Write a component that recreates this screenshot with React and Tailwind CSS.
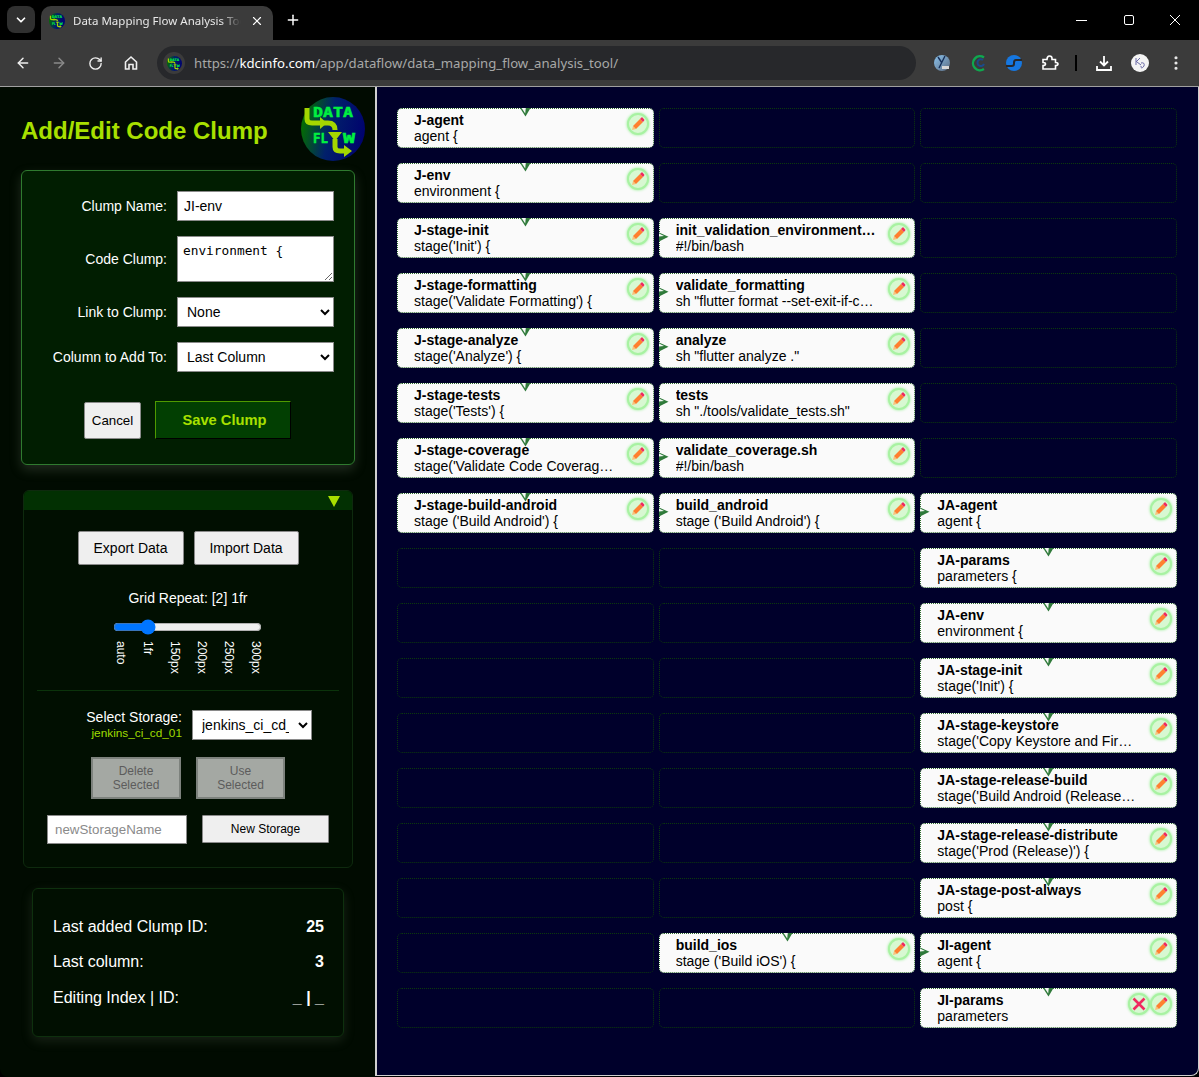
import React from "react";
import { ArrowLeft, ArrowRight, RotateCw, Plus, X, ChevronDown, EllipsisVertical } from "lucide-react";

const rows = [
  [{ n: "J-agent", c: "agent {", top: 1 }, null, null],
  [{ n: "J-env", c: "environment {", top: 1 }, null, null],
  [{ n: "J-stage-init", c: "stage('Init') {", top: 1 }, { n: "init_validation_environment.sh", c: "#!/bin/bash", left: 1 }, null],
  [{ n: "J-stage-formatting", c: "stage('Validate Formatting') {", top: 1 }, { n: "validate_formatting", c: 'sh "flutter format --set-exit-if-changed"', left: 1 }, null],
  [{ n: "J-stage-analyze", c: "stage('Analyze') {", top: 1 }, { n: "analyze", c: 'sh "flutter analyze ."', left: 1 }, null],
  [{ n: "J-stage-tests", c: "stage('Tests') {", top: 1 }, { n: "tests", c: 'sh "./tools/validate_tests.sh"', left: 1 }, null],
  [{ n: "J-stage-coverage", c: "stage('Validate Code Coverage') {", top: 1 }, { n: "validate_coverage.sh", c: "#!/bin/bash", left: 1 }, null],
  [{ n: "J-stage-build-android", c: "stage ('Build Android') {", top: 1 }, { n: "build_android", c: "stage ('Build Android') {", left: 1 }, { n: "JA-agent", c: "agent {", left: 1 }],
  [null, null, { n: "JA-params", c: "parameters {", top: 1 }],
  [null, null, { n: "JA-env", c: "environment {", top: 1 }],
  [null, null, { n: "JA-stage-init", c: "stage('Init') {", top: 1 }],
  [null, null, { n: "JA-stage-keystore", c: "stage('Copy Keystore and Firebase') {", top: 1 }],
  [null, null, { n: "JA-stage-release-build", c: "stage('Build Android (Release)') {", top: 1 }],
  [null, null, { n: "JA-stage-release-distribute", c: "stage('Prod (Release)') {", top: 1 }],
  [null, null, { n: "JA-stage-post-always", c: "post {", top: 1 }],
  [null, { n: "build_ios", c: "stage ('Build iOS') {", top: 1 }, { n: "JI-agent", c: "agent {", left: 1 }],
  [null, null, { n: "JI-params", c: "parameters", top: 1, del: 1 }],
];

const arial = "font-['Liberation_Sans',Arial,sans-serif]";

function Logo({ size, small }) {
  const font = "'DejaVu Sans Mono',monospace";
  return (
    <svg width={size} height={size} viewBox="0 0 64 64" className="shrink-0">
      <defs>
        <linearGradient id={small ? "lgs" : "lg"} x1="0" y1="0.55" x2="1" y2="0.75">
          <stop offset="0" stopColor="#046b04" />
          <stop offset="0.42" stopColor="#01206a" />
          <stop offset="1" stopColor="#00006e" />
        </linearGradient>
      </defs>
      <circle cx="32" cy="32" r="32" fill={`url(#${small ? "lgs" : "lg"})`} />
      <path d="M6 11 V22 Q6 26 11 26 H20 M23 26 H27 Q34 26 34 33 M34 42 V50 Q34 54 39 54 H44" fill="none" stroke="#a4d600" strokeWidth="5" />
      <path d="M19 20 L26 26 L19 32 Z M27 35 H41 L34 44 Z M43 48 L51 54 L43 60 Z" fill="#a4d600" />
      <text x="12" y="19.5" fontFamily={font} fontWeight="700" fontSize="14.5" textLength="40" lengthAdjust="spacingAndGlyphs" fill="#00f040" stroke="#00f040" strokeWidth="0.5">DATA</text>
      <text x="12" y="46" fontFamily={font} fontWeight="700" fontSize="14.5" textLength="15" lengthAdjust="spacingAndGlyphs" fill="#00f040" stroke="#00f040" strokeWidth="0.5">FL</text>
      <text x="42" y="46" fontFamily={font} fontWeight="700" fontSize="14.5" textLength="12" lengthAdjust="spacingAndGlyphs" fill="#00f040" stroke="#00f040" strokeWidth="0.5">W</text>
    </svg>
  );
}

function PencilBtn() {
  return (
    <span className="flex h-[22px] w-[22px] items-center justify-center rounded-full border-2 border-[#a8f2a2] bg-[#d8f8d2] shadow-[0_0_3px_#8ef08a]">
      <svg width="14" height="14" viewBox="0 0 14 14">
        <path d="M1 13 L2 9 L5 12 Z" fill="#f8c27a" />
        <path d="M2 9 L9 2 L12 5 L5 12 Z" fill="#ff8030" />
        <path d="M9 2 L10.5 0.5 Q11 0.2 11.5 0.6 L13.2 2.4 Q13.6 3 13.2 3.5 L12 5 Z" fill="#f02a60" />
      </svg>
    </span>
  );
}

function DelBtn() {
  return (
    <span className="flex h-[22px] w-[22px] items-center justify-center rounded-full border-2 border-[#a8f2a2] bg-[#d8f8d2] shadow-[0_0_3px_#8ef08a]">
      <svg width="14" height="14" viewBox="0 0 14 14">
        <path d="M1.5 1.5 L12.5 12.5 M12.5 1.5 L1.5 12.5" stroke="#f02a60" strokeWidth="2.6" fill="none" />
      </svg>
    </span>
  );
}

function Card({ d }) {
  return (
    <div className="relative h-10 min-w-0 rounded-[5px] border border-dotted border-[#2f6b2f] bg-[#fafafa] pl-4 pt-[3px] text-[14px] leading-4 text-black">
      {d.top ? (
        <svg width="11" height="9" viewBox="0 0 11 9" className="absolute left-[122px] top-[-1px]">
          <path d="M0 0 L5.5 8.5 L10.5 0 Z" fill="#2f7a3a" />
          <path d="M1.6 0 L5.2 5.6 L5.8 0 Z" fill="#f4f8f4" />
        </svg>
      ) : null}
      {d.left ? (
        <svg width="10" height="10" viewBox="0 0 10 10" className="absolute left-[-1px] top-[13px]">
          <path d="M0 0.5 L9.5 4.8 L0 9.5 Z" fill="#2f7a3a" />
          <path d="M0 1.5 L5 4 L0 4.5 Z" fill="#f4f8f4" />
        </svg>
      ) : null}
      <div className="max-w-[200px] truncate font-bold">{d.n}</div>
      <div className="max-w-[200px] truncate">{d.c}</div>
      <div className="absolute right-[4px] top-[4px] flex">
        {d.del ? <DelBtn /> : null}
        <PencilBtn />
      </div>
    </div>
  );
}

const Empty = () => <div className="h-10 rounded-[5px] border border-dotted border-[#0c3a0c]" />;

const inputCls = "h-[30px] w-[157px] border border-[#8a8a8a] bg-white text-[14px] text-black";

function FormRow({ label, children, className }) {
  return (
    <div className={`flex items-center ${className}`}>
      <label className="w-[155px] pr-[10px] text-right text-[14px] text-white">{label}</label>
      {children}
    </div>
  );
}

function Tick({ t }) {
  return (
    <span className="flex w-[27px] justify-center">
      <span className="text-[12px] leading-[14px] text-white [writing-mode:vertical-lr]">{t}</span>
    </span>
  );
}

function Stat({ k, v, className }) {
  return (
    <div className={`flex justify-between text-[16px] leading-[18px] text-white ${className}`}>
      <span>{k}</span>
      <span className="font-bold">{v}</span>
    </div>
  );
}

export default function App() {
  return (
    <div className={`flex h-[1077px] w-[1199px] flex-col overflow-hidden bg-black ${arial}`}>
      {/* tab strip */}
      <div className="flex h-10 items-end bg-black pl-[7px] font-['Noto_Sans',sans-serif]">
        <div className="mb-[7px] flex h-[27px] w-[28px] items-center justify-center rounded-lg bg-[#303030]">
          <ChevronDown size={14} strokeWidth={3} className="text-white" />
        </div>
        <div className="ml-[6px] flex h-[34px] w-[232px] items-center rounded-t-[10px] bg-[#3b3b3b] pb-1 pl-2 pr-[6px]">
          <Logo size={16} small />
          <span className="ml-2 w-[168px] overflow-hidden whitespace-nowrap text-[11.5px] text-[#e8e8e8] [mask-image:linear-gradient(to_right,black_88%,transparent)]">
            Data Mapping Flow Analysis Tool
          </span>
          <X size={14} className="ml-[9px] text-white" />
        </div>
        <Plus size={16} strokeWidth={2.2} className="mb-[12px] ml-[12px] text-white" />
        <div className="mb-[13px] ml-auto flex items-center gap-[32px] pr-[17px] text-white">
          <svg width="14" height="14" viewBox="0 0 14 14"><path d="M0 7.5 H11" stroke="#fff" fill="none" /></svg>
          <svg width="14" height="14" viewBox="0 0 14 14"><rect x="2.5" y="2.5" width="9" height="9" rx="1.5" stroke="#fff" fill="none" /></svg>
          <svg width="14" height="14" viewBox="0 0 14 14"><path d="M2 2 L12 12 M12 2 L2 12" stroke="#fff" fill="none" /></svg>
        </div>
      </div>

      {/* toolbar */}
      <div className="flex h-[47px] items-center border-b border-[#a0a0a0] bg-[#3b3b3b] pl-[15px] pr-[8px]">
        <ArrowLeft size={16} strokeWidth={2.2} className="text-[#f0f0f0]" />
        <ArrowRight size={16} strokeWidth={2.2} className="ml-5 text-[#8a8a8a]" />
        <RotateCw size={15} strokeWidth={2.2} className="ml-[21px] text-[#f0f0f0]" />
        <svg width="16" height="16" viewBox="0 0 16 16" className="ml-[20px]">
          <path d="M2.5 14 V7 L8 2 L13.5 7 V14 H10 V9.5 H6 V14 Z" fill="none" stroke="#f0f0f0" strokeWidth="1.6" />
        </svg>
        <div className="ml-[18px] flex h-[34px] w-[759px] shrink-0 items-center rounded-full bg-[#27282b] pl-[6px] font-['Noto_Sans',sans-serif] text-[13.2px]">
          <span className="flex h-[22px] w-[22px] items-center justify-center rounded-full bg-[#3b3b3b]"><Logo size={15} small /></span>
          <span className="ml-[9px] pt-[1px] text-[#a8a8a8]">https://</span>
          <span className="pt-[1px] text-white">kdcinfo.com</span>
          <span className="pt-[1px] text-[#a8a8a8]">/app/dataflow/data_mapping_flow_analysis_tool/</span>
        </div>
        <svg width="18" height="18" viewBox="0 0 18 18" className="ml-[17px] shrink-0">
          <defs><linearGradient id="ext1" x1="0" y1="0" x2="1" y2="1"><stop offset="0" stopColor="#8cc4ee" /><stop offset="1" stopColor="#5a6a80" /></linearGradient></defs>
          <circle cx="9" cy="9" r="8" fill="url(#ext1)" />
          <path d="M5 3 L9 9 M12 2 L6 14" stroke="#17305a" strokeWidth="1.4" fill="none" />
          <path d="M9 12 h7 v3 h-7 Z" fill="#d8d8d8" />
        </svg>
        <svg width="18" height="18" viewBox="0 0 18 18" className="ml-[18px] shrink-0">
          <path d="M15 3.5 A7 7 0 1 0 15 15" stroke="#0fa84f" strokeWidth="2.4" fill="none" />
          <path d="M14 6 A3.4 3.4 0 1 0 15 10" stroke="#1c4a8a" strokeWidth="2" fill="none" />
        </svg>
        <svg width="18" height="18" viewBox="0 0 18 18" className="ml-[18px] shrink-0">
          <circle cx="9" cy="9" r="8" fill="#1677e0" />
          <path d="M17 6 H11 Q9 6 9 8.5 V10 Q9 12 6.5 12 H1" stroke="#27282b" strokeWidth="2" fill="none" />
        </svg>
        <svg width="18" height="18" viewBox="0 0 18 18" className="ml-[18px] shrink-0">
          <path d="M2 6 H6 Q6 2.5 8.5 2.5 Q11 2.5 11 5 V6 H14.5 V9 Q17 9 17 10.5 Q17 12 14.5 12 V15.5 H2 V12 Q4.5 12 4.5 10.5 Q4.5 9 2 9 Z" fill="none" stroke="#fff" strokeWidth="1.6" transform="translate(0 -0.5)" />
        </svg>
        <div className="ml-[16px] h-4 w-[2px] shrink-0 bg-black" />
        <svg width="18" height="18" viewBox="0 0 18 18" className="ml-[18px] shrink-0">
          <path d="M9 2 V11 M5 7.5 L9 11.5 L13 7.5 M2 12 V16 H16 V12" stroke="#fff" strokeWidth="1.8" fill="none" />
        </svg>
        <svg width="18" height="18" viewBox="0 0 18 18" className="ml-[18px] shrink-0">
          <circle cx="9" cy="9" r="9" fill="#f4f4f4" />
          <path d="M5 4 V11 M5 8 L9 4 M6 8 L10 11 M10 9 Q14 8 13 12 Q10 16 10 12" stroke="#6a6aa8" strokeWidth="1" fill="none" />
        </svg>
        <EllipsisVertical size={18} strokeWidth={2.2} className="ml-[18px] shrink-0 text-[#e8e8e8]" />
      </div>

      {/* main */}
      <div className="flex min-h-0 flex-1">
        {/* sidebar */}
        <aside className="flex w-[375px] shrink-0 flex-col rounded-bl-[8px] bg-[#010b01] pl-[21px] pr-[20px]">
          <div className="flex h-[83px] items-center justify-between">
            <h1 className="mt-[5px] text-[24px] font-bold text-[#a8e000]">Add/Edit Code Clump</h1>
            <span className="-mr-[10px]"><Logo size={64} /></span>
          </div>

          <section className="h-[295px] w-[334px] rounded-[6px] border border-[#2f7a2f] bg-[#011e01] pt-[20px] shadow-[0_5px_12px_rgba(120,130,110,0.28)]">
            <FormRow label="Clump Name:" className="mb-[15px]">
              <input readOnly value="JI-env" className={`${inputCls} px-[6px]`} />
            </FormRow>
            <FormRow label="Code Clump:" className="mb-[15px]">
              <textarea readOnly value="environment {" className="h-[46px] w-[157px] resize-y border border-[#8a8a8a] bg-white px-[5px] py-[5px] font-['DejaVu_Sans_Mono',monospace] text-[12.8px] leading-[18px] text-black" />
            </FormRow>
            <FormRow label="Link to Clump:" className="mb-[15px]">
              <select className={`${inputCls} pl-[5px]`} defaultValue="None"><option>None</option></select>
            </FormRow>
            <FormRow label="Column to Add To:">
              <select className={`${inputCls} pl-[5px]`} defaultValue="Last Column"><option>Last Column</option></select>
            </FormRow>
            <div className="mt-[29px] flex items-center pl-[62px]">
              <button className="h-[37px] w-[57px] rounded-[2px] border border-[#8a8a8a] bg-[#efefef] pt-[1px] text-[13.33px] text-black">Cancel</button>
              <button className="ml-[14px] h-[38px] w-[136px] border border-t-[#4f9a00] border-l-[#4f9a00] border-r-black border-b-black bg-[#023f02] pl-[3px] pt-[1px] text-[14.7px] font-bold text-[#a8e000]">Save Clump</button>
            </div>
          </section>

          <section className="mt-[25px] ml-[2px] h-[378px] w-[330px] rounded-[6px] border border-[#0e2a0e] bg-[#010f01]">
            <div className="flex h-[19px] items-center justify-end rounded-t-[5px] bg-[#023002] pr-[12px]">
              <svg width="12" height="11" viewBox="0 0 12 11" className="mt-[1px]"><path d="M0 0 H12 L6 11 Z" fill="#a8e000" /></svg>
            </div>
            <div className="mt-[21px] flex justify-center gap-[10px]">
              <button className="h-[34px] w-[106px] rounded-[2px] border border-[#8a8a8a] bg-[#efefef] text-[14px] text-black">Export Data</button>
              <button className="h-[34px] w-[105px] rounded-[2px] border border-[#8a8a8a] bg-[#efefef] text-[14px] text-black">Import Data</button>
            </div>
            <div className="mt-[25px] text-center text-[14px] leading-4 text-white">Grid Repeat: [2] 1fr</div>
            <div className="mt-[13px] pl-[89px]">
              <input type="range" min="0" max="5" defaultValue="1" className="block h-4 w-[149px] accent-[#0075ff]" />
            </div>
            <div className="mt-[6px] flex h-[34px] pl-[83px]">
              {["auto", "1fr", "150px", "200px", "250px", "300px"].map((t) => <Tick key={t} t={t} />)}
            </div>
            <div className="mx-[13px] mt-[15px] h-px bg-[#0b330b]" />
            <div className="mt-[18px] flex items-center pl-[61px]">
              <div className="w-[97px] text-right">
                <div className="text-[14px] leading-4 text-white">Select Storage:</div>
                <div className="text-[11.8px] leading-4 text-[#a0dc00]">jenkins_ci_cd_01</div>
              </div>
              <select className="ml-[10px] h-[30px] w-[120px] border border-[#8a8a8a] bg-white pl-[5px] pr-[6px] text-[14px] text-black" defaultValue="a">
                <option value="a">jenkins_ci_cd_01</option>
              </select>
            </div>
            <div className="mt-[16px] flex pl-[67px]">
              <button disabled className="h-[42px] w-[90px] border-2 border-[#7d827d] bg-[#a4a8a3] text-[12px] leading-[14px] text-[#5c5c5c]">Delete<br />Selected</button>
              <button disabled className="ml-[15px] h-[42px] w-[89px] border-2 border-[#7d827d] bg-[#a4a8a3] text-[12px] leading-[14px] text-[#5c5c5c]">Use<br />Selected</button>
            </div>
            <div className="mt-[16px] flex items-start pl-[23px]">
              <input readOnly placeholder="newStorageName" className="h-[29px] w-[140px] border border-[#8a8a8a] bg-white px-[7px] text-[13.33px] text-black placeholder:text-[#8a8a8a]" />
              <button className="ml-[15px] h-[28px] w-[127px] rounded-[1px] border border-[#8a8a8a] bg-[#efefef] text-[12px] text-black">New Storage</button>
            </div>
          </section>

          <section className="mt-[20px] ml-[11px] h-[149px] w-[312px] rounded-[6px] border border-[#0e300e] bg-[#010f01] pl-5 pr-[19px] pt-[29px] shadow-[0_4px_12px_rgba(120,130,110,0.2)]">
            <Stat k="Last added Clump ID:" v="25" />
            <Stat k="Last column:" v="3" className="mt-[17px]" />
            <Stat k="Editing Index | ID:" v="_ | _" className="mt-[18px]" />
          </section>
        </aside>

        {/* grid */}
        <main className="mb-[1px] min-w-0 flex-1 rounded-br-[8px] border-x border-b border-l-2 border-[#cfcfcf] bg-[#00002b] pl-[20px] pr-[21px] pt-[21px]">
          <div className="grid grid-cols-3 gap-x-[5px] gap-y-[15px]">
            {rows.flatMap((r, i) =>
              r.map((d, j) => (d ? <Card key={`${i}-${j}`} d={d} /> : <Empty key={`${i}-${j}`} />))
            )}
          </div>
        </main>
      </div>
    </div>
  );
}
